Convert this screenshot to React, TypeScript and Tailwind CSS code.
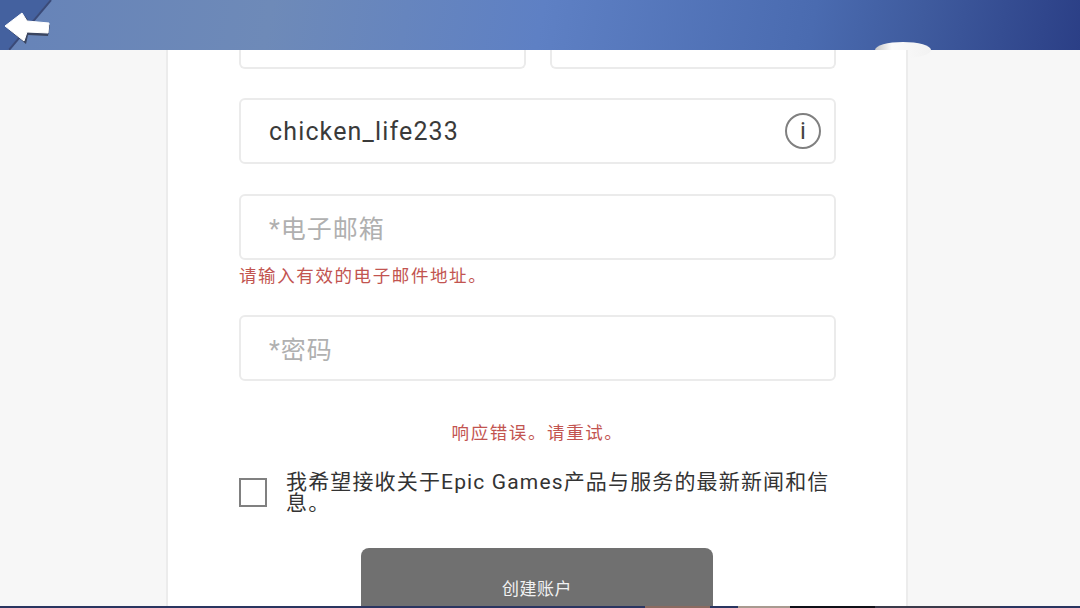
const cjk = "font-['Roboto','Noto_Sans_CJK_SC',sans-serif]";

function Field({ text, dark, info }: { text: string; dark?: boolean; info?: boolean }) {
  return (
    <div className="flex h-[66px] items-center justify-between rounded-[6px] border-2 border-[#ebebeb] bg-white pl-[28px] pr-[13px]">
      <span className={`text-[25px] leading-[30px] ${dark ? "pt-[1px] tracking-[1.15px] text-[#3a3a3a]" : "pt-[5px] tracking-[1px] text-[#b0b0b0]"}`}>{text}</span>
      {info && (
        <span className="flex h-[36px] w-[36px] items-center justify-center rounded-full border-2 border-[#808080] text-[24px] leading-none text-[#444]">
          i
        </span>
      )}
    </div>
  );
}

export default function App() {
  return (
    <div className={`flex h-[608px] w-[1080px] flex-col overflow-hidden bg-[#f7f7f7] ${cjk}`}>
      <header className="relative z-0 h-[50px] shrink-0 bg-[linear-gradient(100deg,#6683b8_0%,#6e8ab8_25%,#5e80c4_50%,#4a6bb0_75%,#3f5b9e_85%,#2b3f86_100%)]">
        <svg className="absolute left-0 top-0" width="60" height="50" viewBox="0 0 60 50">
          <path d="M0 0H50L8 50H0Z" fill="#44619f" />
          <path d="M51 0L9 50" stroke="#3a4a78" strokeWidth="2" fill="none" />
          <path d="M25 16L31 25H50L48 36L28 35L26 44L9 30Z" fill="#3a4560" />
          <path d="M22 13L27 21L49 23L48 33L27 32L24 41L5 26Z" fill="#ffffff" stroke="#ffffff" strokeWidth="1" strokeLinejoin="round" />
        </svg>
        <div className="absolute left-[875px] top-[42px] h-[16px] w-[56px] rounded-[50%] bg-[linear-gradient(90deg,#c8c8c8,#fbfbfb_30%,#f2f2f2)]" />
      </header>

      <main className="flex min-h-0 flex-1 pl-[166px]">
        <div className="relative z-10 flex w-[742px] flex-col border-x-2 border-x-[#ececec] bg-white pl-[71px] pr-[70px]">
          <div className="flex h-[19px] gap-[24px]">
            <div className="h-[19px] flex-1 rounded-b-[6px] border-2 border-t-0 border-[#ebebeb]" />
            <div className="h-[19px] flex-1 rounded-b-[6px] border-2 border-t-0 border-[#ebebeb]" />
          </div>

          <div className="mt-[29px]">
            <Field text="chicken_life233" dark info />
          </div>
          <div className="mt-[30px]">
            <Field text="*电子邮箱" />
          </div>
          <p className="mt-[5px] h-[22px] text-[17.5px] leading-[22px] tracking-[1.6px] text-[#c25450]">
            请输入有效的电子邮件地址。
          </p>
          <div className="mt-[28px]">
            <Field text="*密码" />
          </div>
          <p className="mt-[41px] h-[22px] text-center text-[17.5px] leading-[22px] tracking-[1.6px] text-[#c25450]">
            响应错误。请重试。
          </p>

          <div className="mt-[28px] flex gap-[19px]">
            <div className="mt-[6px] h-[29px] w-[28px] shrink-0 border-2 border-[#808080]" />
            <p className="text-[21px] leading-[21px] tracking-[1.15px] text-[#333]">
              我希望接收关于Epic Games产品与服务的最新新闻和信息。
            </p>
          </div>

          <button className="ml-[122px] mt-[34px] h-[60px] w-[352px] shrink-0 rounded-t-[8px] bg-[#707070] pt-[24px] text-[17px] tracking-[0.5px] text-[#f2f2f2]">
            创建账户
          </button>
        </div>
      </main>

      <div className="relative z-20 flex h-[2px] shrink-0 bg-[#2a3560]">
        <div className="w-[645px]" />
        <div className="w-[65px] bg-[#8a6a60]" />
        <div className="w-[28px]" />
        <div className="w-[52px] bg-[#a89a90]" />
        <div className="w-[85px] bg-[#101018]" />
        <div className="w-[125px] bg-[#3a3a4a]" />
      </div>
    </div>
  );
}
